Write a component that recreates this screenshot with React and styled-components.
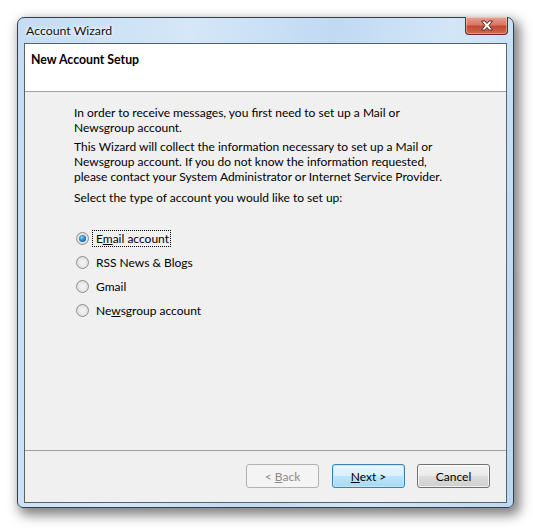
import styled, { createGlobalStyle } from "styled-components";

const GlobalStyle = createGlobalStyle`
  html, body {
    height: 100%;
  }
  body {
    margin: 0;
    background: #ffffff;
    font-family: Lato, "Noto Sans", sans-serif;
    font-size: 12px;
    color: #000;
  }
`;

const Page = styled.div`
  height: 528px;
  box-sizing: border-box;
  padding: 17px 0 0 17px;
`;

const Window = styled.div`
  box-sizing: border-box;
  width: 497px;
  height: 491px;
  display: flex;
  flex-direction: column;
  padding: 0 6px 4px;
  border: 1px solid #33404c;
  border-radius: 7px 7px 6px 6px;
  background: linear-gradient(100deg, #c3dcf3 0%, #d5e7f8 30%, #c0daf2 55%, #d3e6f8 75%, #bcd8f1 100%);
  box-shadow: 4px 5px 12px 2px rgba(0, 0, 0, 0.5);
`;

const TitleBar = styled.div`
  height: 25px;
  display: flex;
  justify-content: space-between;
  align-items: flex-start;
  padding-left: 2px;
`;

const Title = styled.span`
  line-height: 25px;
  font-size: 12.3px;
  color: #111;
  text-shadow: 0 0 6px #fff, 0 0 3px #fff;
`;

const CloseButton = styled.div`
  box-sizing: border-box;
  width: 43px;
  height: 18px;
  margin: -1px -1px 0 0;
  display: flex;
  align-items: center;
  justify-content: center;
  border: 1px solid #6a2a22;
  border-top: none;
  border-radius: 0 0 4px 4px;
  background: linear-gradient(#e7a292 0%, #d87765 45%, #c24a36 55%, #cf6a4e 100%);
  box-shadow: inset 0 0 0 1px rgba(255, 255, 255, 0.35);
`;

const Client = styled.div`
  flex: 1;
  display: flex;
  flex-direction: column;
  border: 1px solid #56626e;
  background: #f0f0f0;
`;

const Header = styled.div`
  box-sizing: border-box;
  height: 48px;
  padding: 8px 0 0 6px;
  background: #ffffff;
  border-bottom: 1px solid #a0a0a0;
  font-weight: bold;
  font-size: 12.3px;
  line-height: 15px;
`;

const Body = styled.div`
  flex: 1;
  padding: 13px 0 0 49px;
  line-height: 15px;
`;

const Para = styled.p`
  margin: 0 0 ${(p) => p.$gap || 4}px;
  white-space: nowrap;
`;

const RadioGroup = styled.div`
  margin-top: 21px;
  margin-left: 2px;
  display: flex;
  flex-direction: column;
`;

const RadioRow = styled.label`
  height: 24px;
  display: flex;
  align-items: center;
  gap: 3px;
`;

const RadioDot = styled.span`
  box-sizing: border-box;
  width: 13px;
  height: 13px;
  border-radius: 50%;
  border: 1px solid #8e8f8f;
  background: radial-gradient(circle at 50% 50%, #f6f6f6 0%, #e6e6e6 55%, #d2d2d2 100%);
  display: flex;
  align-items: center;
  justify-content: center;

  &::after {
    content: "";
    display: ${(p) => (p.$checked ? "block" : "none")};
    width: 7px;
    height: 7px;
    border-radius: 50%;
    background: radial-gradient(circle at 40% 35%, #8fd2fb 0%, #2c86c9 45%, #0e4a80 100%);
  }
`;

const RadioLabel = styled.span`
  padding: 0 1px 0 3px;
  line-height: 15px;
  border: 1px dotted ${(p) => (p.$focused ? "#000" : "transparent")};
`;

const Footer = styled.div`
  box-sizing: border-box;
  height: 52px;
  border-top: 1px solid #a0a0a0;
  display: flex;
  justify-content: flex-end;
  align-items: flex-start;
  gap: 12px;
  padding: 13px 16px 0 0;
`;

const Button = styled.button`
  box-sizing: border-box;
  width: 73px;
  height: 24px;
  font-family: inherit;
  font-size: 12px;
  border-radius: 3px;
  border: 1px solid #707070;
  color: #000;
  background: linear-gradient(#f2f2f2 0%, #ebebeb 50%, #dddddd 50%, #cfcfcf 100%);
  box-shadow: inset 0 0 0 1px rgba(255, 255, 255, 0.7);

  &:disabled {
    color: #8a8a8a;
    border-color: #adb2b5;
    background: #f4f4f4;
    box-shadow: none;
  }

  ${(p) =>
    p.$default &&
    `
    border-color: #3c7fb1;
    background: linear-gradient(#eaf6fd 0%, #d9f0fc 50%, #bee6fd 50%, #a7d9f5 100%);
    box-shadow: inset 0 0 0 1px #c6e8fb;
  `}
`;

const Back = styled(Button)`
  margin-right: 1px;
`;

const U = styled.span`
  text-decoration: underline;
`;

const accounts = [
  { pre: "E", key: "m", post: "ail account", checked: true },
  { pre: "RSS News & Blogs" },
  { pre: "Gmail" },
  { pre: "Ne", key: "w", post: "sgroup account" },
];

function CloseGlyph() {
  return (
    <svg width="14" height="11" viewBox="0 0 14 11">
      <path
        d="M1.5 1 H5 L7 3.5 L9 1 H12.5 L9 5.5 L12.5 10 H9 L7 7.5 L5 10 H1.5 L5 5.5 Z"
        fill="#ffffff"
        stroke="#5a2a24"
        strokeWidth="1"
        strokeLinejoin="round"
      />
    </svg>
  );
}

export default function App() {
  return (
    <>
      <GlobalStyle />
      <Page>
        <Window>
          <TitleBar>
            <Title>Account Wizard</Title>
            <CloseButton>
              <CloseGlyph />
            </CloseButton>
          </TitleBar>
          <Client>
            <Header>New Account Setup</Header>
            <Body>
              <Para>
                In order to receive messages, you first need to set up a Mail or
                <br />
                Newsgroup account.
              </Para>
              <Para $gap={6}>
                This Wizard will collect the information necessary to set up a Mail or
                <br />
                Newsgroup account. If you do not know the information requested,
                <br />
                please contact your System Administrator or Internet Service Provider.
              </Para>
              <Para $gap={0}>Select the type of account you would like to set up:</Para>
              <RadioGroup>
                {accounts.map((a) => (
                  <RadioRow key={a.pre}>
                    <RadioDot $checked={a.checked} />
                    <RadioLabel $focused={a.checked}>
                      {a.pre}
                      {a.key && <U>{a.key}</U>}
                      {a.post}
                    </RadioLabel>
                  </RadioRow>
                ))}
              </RadioGroup>
            </Body>
            <Footer>
              <Back disabled>
                &lt; <U>B</U>ack
              </Back>
              <Button $default>
                <U>N</U>ext &gt;
              </Button>
              <Button>Cancel</Button>
            </Footer>
          </Client>
        </Window>
      </Page>
    </>
  );
}
